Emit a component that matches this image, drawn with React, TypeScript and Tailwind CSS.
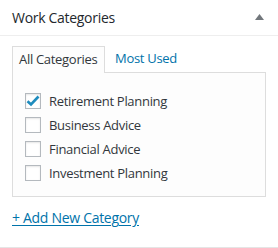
const CATEGORIES = [
  { name: 'Retirement Planning', checked: true },
  { name: 'Business Advice', checked: false },
  { name: 'Financial Advice', checked: false },
  { name: 'Investment Planning', checked: false },
];

function Check({ checked }: { checked: boolean }) {
  return (
    <span className="flex h-4 w-4 shrink-0 items-center justify-center border border-[#b4b9be] bg-white shadow-[inset_0_1px_2px_rgba(0,0,0,0.1)]">
      {checked && (
        <svg width="14" height="12" viewBox="0 0 14 12" aria-hidden>
          <path d="M1.5 6.2 L5 9.5 L12.5 1.5" fill="none" stroke="#1e8cbe" strokeWidth="2.6" />
        </svg>
      )}
    </span>
  );
}

export default function App() {
  return (
    <div className="h-[248px] w-[278px] bg-white font-['Open_Sans',sans-serif] text-[#32373c]">
      <div className="flex h-[248px] flex-col border-b border-[#e5e5e5]">
        <div className="flex h-[36px] items-center justify-between border-b border-[#eee] pl-3 pr-[14px]">
          <h2 className="text-[14px] leading-none tracking-[-0.3px] text-[#23282d]">Work Categories</h2>
          <svg width="9" height="6" viewBox="0 0 9 6" aria-hidden className="-mt-[1px]">
            <path d="M4.5 0 L9 6 L0 6 Z" fill="#72777c" />
          </svg>
        </div>
        <div className="px-3 pt-[9px]">
          <div className="flex items-end text-[13px] tracking-[-0.3px]">
            <div className="relative z-10 -mb-px flex h-[27px] w-[93px] items-center border border-b-0 border-[#ddd] bg-[#fdfdfd] pl-[6px] text-[#32373c]">
              All Categories
            </div>
            <div className="flex h-[27px] items-center pl-[10px] text-[#0073aa]">Most Used</div>
          </div>
          <div className="flex h-[125px] w-[254px] flex-col border border-[#ddd] bg-[#fdfdfd] pl-3 pt-[20px]">
            {CATEGORIES.map((c) => (
              <label key={c.name} className="flex h-6 items-start gap-[8px] text-[13px] leading-4 tracking-[-0.3px]">
                <Check checked={c.checked} />
                <span>{c.name}</span>
              </label>
            ))}
          </div>
          <div className="pt-[10px] leading-5">
            <a className="text-[14px] tracking-[-0.3px] text-[#0073aa] underline underline-offset-2">+ Add New Category</a>
          </div>
        </div>
      </div>
    </div>
  );
}
